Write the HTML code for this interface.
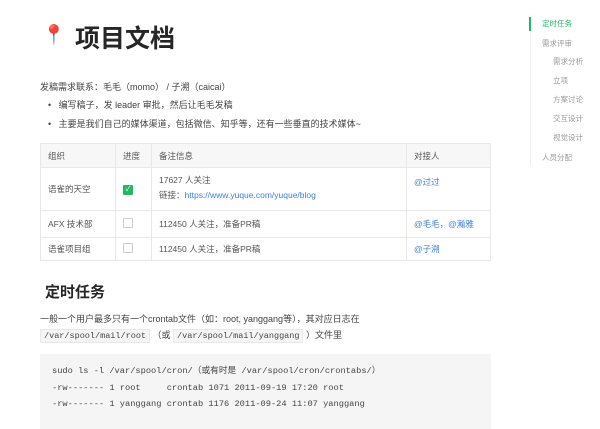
<!DOCTYPE html>
<html><head><meta charset="utf-8"><style>
body{margin:0;width:600px;height:429px;background:#fff;font-family:"Liberation Sans","Noto Sans CJK SC",sans-serif;color:#333;position:relative;overflow:hidden}
.a{position:absolute;white-space:nowrap}
.t{font-size:9px;color:#444}
table{position:absolute;left:40px;top:143px;width:451px;border-collapse:collapse;font-size:8.5px;color:#555}
td{border:1px solid #e8e8e8;padding:0 7px;vertical-align:middle}
tr.h td{background:#f7f7f7;height:23px}
a{color:#3c82e0;text-decoration:none}
.cb{display:inline-block;width:8px;height:8px;border:1px solid #ccc;border-radius:1px}
.side{font-size:7.5px;color:#999}
.mono{font-family:"Liberation Mono","Noto Sans CJK SC",monospace}
</style></head><body>
<div class="a" style="left:42px;top:23px;font-size:19px;color:#c33">📍</div>
<div class="a" style="left:75px;top:19px;font-size:25px;font-weight:bold;color:#262626">项目文档</div>
<div class="a t" style="left:40px;top:80px">发稿需求联系：毛毛（momo） / 子溯（caicai）</div>
<div class="a t" style="left:48px;top:98px">•&nbsp;&nbsp; 编写稿子，发 leader 审批，然后让毛毛发稿</div>
<div class="a t" style="left:48px;top:117px">•&nbsp;&nbsp; 主要是我们自己的媒体渠道，包括微信、知乎等，还有一些垂直的技术媒体~</div>
<table>
<tr class="h"><td style="width:60px">组织</td><td style="width:21px">进度</td><td style="width:240px">备注信息</td><td>对接人</td></tr>
<tr style="height:43px"><td>语雀的天空</td><td><span class="cb" style="background:#25b864;border-color:#25b864;color:#fff;font-size:7px;line-height:8px;text-align:center">✓</span></td><td>17627 人关注<br><span style="line-height:19px">链接：<a>https://www.yuque.com/yuque/blog</a></span></td><td style="vertical-align:top;padding-top:8px"><a>@过过</a></td></tr>
<tr style="height:27px"><td>AFX 技术部</td><td><span class="cb"></span></td><td>112450 人关注，准备PR稿</td><td><a>@毛毛，@瀚雅</a></td></tr>
<tr style="height:23px"><td>语雀项目组</td><td><span class="cb"></span></td><td>112450 人关注，准备PR稿</td><td><a>@子溯</a></td></tr>
</table>
<div class="a" style="left:45px;top:281px;font-size:15px;font-weight:bold;color:#262626">定时任务</div>
<div class="a t" style="left:40px;top:312px">一般一个用户最多只有一个crontab文件（如：root, yanggang等），其对应日志在</div>
<div class="a t" style="left:40px;top:328px"><span class="mono" style="background:#f5f5f5;border:1px solid #e8e8e8;padding:1px 3px;font-size:8.5px">/var/spool/mail/root</span> （或 <span class="mono" style="background:#f5f5f5;border:1px solid #e8e8e8;padding:1px 3px;font-size:8.5px">/var/spool/mail/yanggang</span> ）文件里</div>
<div class="a mono" style="left:40px;top:354px;height:75px;background:#f5f5f5;padding:9px 0 0 12px;font-size:8.7px;line-height:16.5px;color:#444;box-sizing:border-box;width:451px">sudo ls -l /var/spool/cron/（或有时是 /var/spool/cron/crontabs/）<br>-rw------- 1 root&nbsp;&nbsp;&nbsp;&nbsp; crontab 1071 2011-09-19 17:20 root<br>-rw------- 1 yanggang crontab 1176 2011-09-24 11:07 yanggang</div>
<div class="a" style="left:530px;top:15px;width:1px;height:150px;background:#eee"></div>
<div class="a" style="left:529px;top:17px;width:2px;height:14px;background:#25b864"></div>
<div class="a side" style="left:542px;top:18px;color:#25b864">定时任务</div>
<div class="a side" style="left:542px;top:38px">需求评审</div>
<div class="a side" style="left:553px;top:56px">需求分析</div>
<div class="a side" style="left:553px;top:75px">立项</div>
<div class="a side" style="left:553px;top:94px">方案讨论</div>
<div class="a side" style="left:553px;top:113px">交互设计</div>
<div class="a side" style="left:553px;top:132px">视觉设计</div>
<div class="a side" style="left:542px;top:152px">人员分配</div>
</body></html>
